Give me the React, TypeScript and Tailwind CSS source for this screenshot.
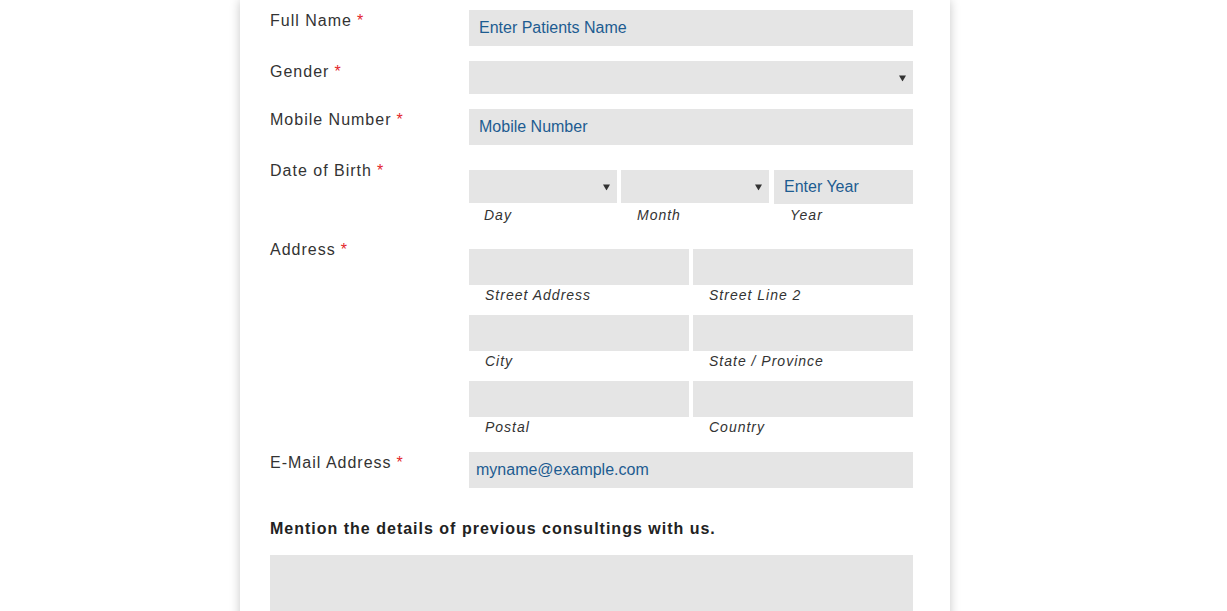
import React from 'react';

const labelCls = 'pt-[1px] text-[16px] leading-[20px] tracking-[1px] text-[#333]';
const inputBase = 'w-full bg-[#e5e5e5] text-[16px] text-[#1d5c91] placeholder:text-[#1d5c91] outline-none';
const inputCls = `${inputBase} px-[10px]`;
const subCls = 'pl-[15px] text-[14px] italic tracking-[1px] text-[#333] leading-[22px]';

function Req() {
  return <span className="text-[#e3262b] ml-[5px]">*</span>;
}

function Arrow() {
  return (
    <svg className="absolute right-[7px] top-1/2 -translate-y-1/2" width="7" height="7" viewBox="0 0 7 7">
      <path d="M0 1 L7 1 L3.5 7 Z" fill="#333" />
    </svg>
  );
}

function Select({ width }: { width: string }) {
  return (
    <div className={`relative ${width}`}>
      <select className="w-full h-[33px] bg-[#e5e5e5] appearance-none outline-none" />
      <Arrow />
    </div>
  );
}

export default function App() {
  const address = [
    ['Street Address', 'Street Line 2'],
    ['City', 'State / Province'],
    ['Postal', 'Country'],
  ];

  return (
    <div className="h-[611px] overflow-hidden bg-white font-['Liberation_Sans',Arial,sans-serif]">
      <div className="ml-[240px] w-[710px] bg-white pl-[30px] pr-[37px] pt-[10px] pb-10 shadow-[0_0_10px_rgba(0,0,0,0.22)]">
        {/* full name */}
        <div className="flex">
          <label className={`w-[199px] ${labelCls}`}>Full Name<Req /></label>
          <input className={`${inputCls} h-[36px] flex-1`} placeholder="Enter Patients Name" />
        </div>

        {/* gender */}
        <div className="flex mt-[15px]">
          <label className={`w-[199px] ${labelCls}`}>Gender<Req /></label>
          <Select width="flex-1" />
        </div>

        {/* mobile */}
        <div className="flex mt-[15px]">
          <label className={`w-[199px] ${labelCls}`}>Mobile Number<Req /></label>
          <input className={`${inputCls} h-[36px] flex-1`} placeholder="Mobile Number" />
        </div>

        {/* date of birth */}
        <div className="flex mt-[15px]">
          <label className={`w-[199px] ${labelCls}`}>Date of Birth<Req /></label>
          <div className="flex-1 flex pt-[10px]">
            <div className="w-[148px]">
              <Select width="w-full" />
              <div className={`${subCls} mt-[1px]`}>Day</div>
            </div>
            <div className="w-[148px] ml-[4px]">
              <Select width="w-full" />
              <div className={`${subCls} pl-[16px] mt-[1px]`}>Month</div>
            </div>
            <div className="flex-1 ml-[5px]">
              <input className={`${inputCls} h-[34px]`} placeholder="Enter Year" />
              <div className={`${subCls} pl-[16px]`}>Year</div>
            </div>
          </div>
        </div>

        {/* address */}
        <div className="flex mt-[13px]">
          <label className={`w-[199px] ${labelCls}`}>Address<Req /></label>
          <div className="flex-1 pt-[10px] flex flex-col gap-[9px]">
            {address.map(([a, b]) => (
              <div key={a} className="flex gap-[4px]">
                <div className="flex-1">
                  <input className={`${inputCls} h-[36px]`} />
                  <div className={`${subCls} pl-[16px] mt-[-1px]`}>{a}</div>
                </div>
                <div className="flex-1">
                  <input className={`${inputCls} h-[36px]`} />
                  <div className={`${subCls} pl-[16px] mt-[-1px]`}>{b}</div>
                </div>
              </div>
            ))}
          </div>
        </div>

        {/* email */}
        <div className="flex mt-[14px]">
          <label className={`w-[199px] ${labelCls}`}>E-Mail Address<Req /></label>
          <input className={`${inputBase} pl-[7px] pr-[10px] h-[36px] flex-1`} placeholder="myname@example.com" />
        </div>

        <h3 className="mt-[31px] text-[16px] leading-[20px] font-bold tracking-[1px] text-[#222]">
          Mention the details of previous consultings with us.
        </h3>

        <textarea className="block mt-[16px] w-full h-[120px] bg-[#e5e5e5] outline-none resize-none" />
      </div>
    </div>
  );
}
